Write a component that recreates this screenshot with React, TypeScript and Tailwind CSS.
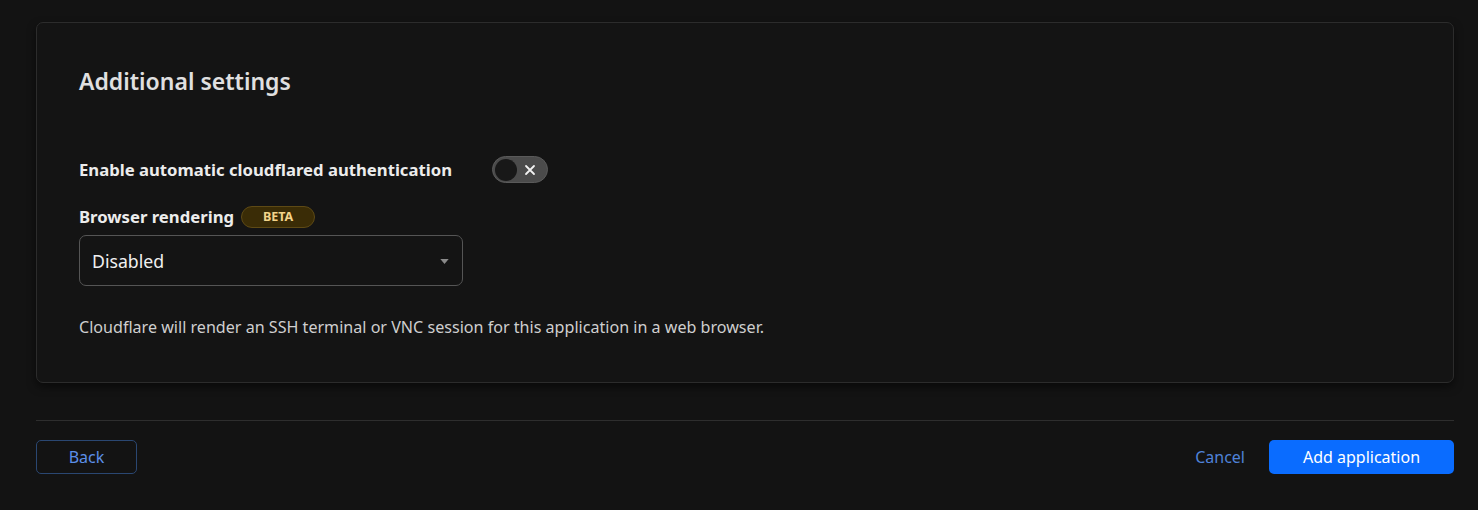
import React, { useState } from 'react';

const font = { fontFamily: '"Noto Sans", "Open Sans", sans-serif' };

function Toggle() {
  const [on, setOn] = useState(false);
  return (
    <button
      onClick={() => setOn(!on)}
      className="relative flex h-[27px] w-[56px] items-center rounded-full border border-[#5a5a5a] bg-[#4b4b4b] px-[2px]"
    >
      <span className="h-[22px] w-[22px] rounded-full bg-[#181818]" />
      <svg viewBox="0 0 12 12" className="absolute right-[11px] h-[12px] w-[12px]" fill="none" stroke="#f2f2f2" strokeWidth="1.8" strokeLinecap="round">
        <path d="M2 2l8 8M10 2l-8 8" />
      </svg>
    </button>
  );
}

export default function App() {
  return (
    <div className="min-h-[510px] bg-[#131313] pl-[36px] pr-[24px] pt-[22px]" style={font}>
      <div className="rounded-[7px] border border-[#2c2c2c] bg-[#141414] px-[42px] pt-[44px] pb-[45px] shadow-[0_4px_8px_rgba(0,0,0,0.5)]">
        <h2 className="text-[23px] font-semibold leading-[28px] text-[#e0e0e0]">Additional settings</h2>

        <div className="mt-[61px] flex items-center gap-[40px]">
          <span className="text-[16.7px] font-bold leading-[22px] text-[#ececec]">Enable automatic cloudflared authentication</span>
          <Toggle />
        </div>

        <div className="mt-[23px] flex items-center gap-[7px]">
          <span className="text-[16.7px] font-bold leading-[22px] text-[#ececec]">Browser rendering</span>
          <span className="flex h-[22px] w-[74px] items-center justify-center rounded-full border border-[#5e4a15] bg-[#3a2c06] text-[12.5px] font-bold text-[#f3d48a]">BETA</span>
        </div>

        <div className="mt-[7px] flex h-[51px] w-[384px] items-center justify-between rounded-[7px] border border-[#555555] bg-[#141414] pl-[12px] pr-[13px] pt-[2px]">
          <span className="text-[17.7px] text-[#f0f0f0]">Disabled</span>
          <svg viewBox="0 0 10 6" className="h-[5px] w-[9px]" fill="#8a8a8a">
            <path d="M0 0h10L5 6z" />
          </svg>
        </div>

        <p className="mt-[31px] text-[16.1px] leading-[20px] text-[#cfcfcf]">
          Cloudflare will render an SSH terminal or VNC session for this application in a web browser.
        </p>
      </div>

      <div className="mt-[37px] border-t border-[#2e2e2e] pt-[19px]">
        <div className="flex items-center justify-between">
          <button className="h-[34px] w-[101px] rounded-[5px] border border-[#2a4772] text-[16px] text-[#5c8fe8]">Back</button>
          <div className="flex items-center gap-[24px]">
            <button className="text-[16px] text-[#4f82d8]">Cancel</button>
            <button className="h-[34px] w-[185px] rounded-[5px] bg-[#0a6cff] text-[16px] text-white">Add application</button>
          </div>
        </div>
      </div>
    </div>
  );
}
